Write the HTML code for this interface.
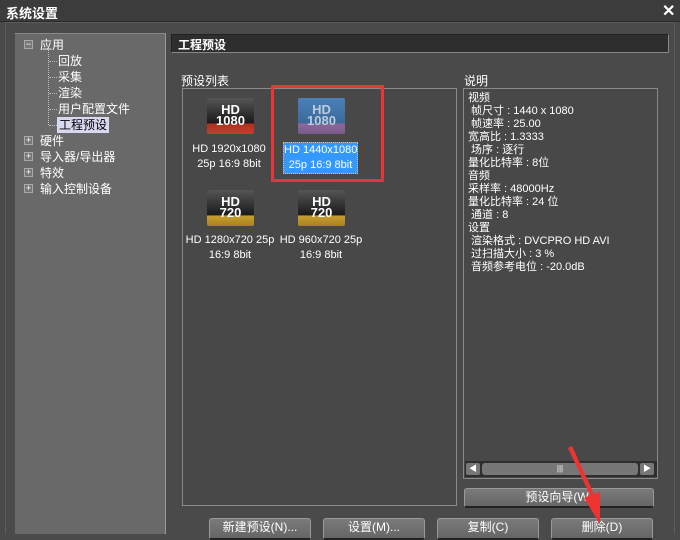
<!DOCTYPE html>
<html><head><meta charset="utf-8"><style>
*{margin:0;padding:0;box-sizing:border-box}
body{width:680px;height:534px;background:#4a4a4a;font-family:"Liberation Sans","Noto Sans CJK SC",sans-serif;font-size:12px;color:#fff;position:relative;overflow:hidden}
.a{position:absolute}
.title{left:0;top:0;width:680px;height:22px;background:#3c3c3c;border-bottom:1px solid #2a2a2a}
.tree{left:15px;top:33px;width:151px;height:501px;background:#696969;border-right:1px solid #9a9a9a;border-top:1px solid #888}
.tl{position:absolute;white-space:nowrap;line-height:16px}
.pm{position:absolute;width:9px;height:9px;border:1px solid #aaa;background:#777;font-size:9px;line-height:7px;text-align:center;color:#fff}
.hz{position:absolute;left:34px;width:8px;border-top:1px dotted #bbb}
.box{border:1px solid #8a8a8a;background:#484848}
.btn{position:absolute;height:20px;background:linear-gradient(#7a7a7a,#666);border:1px solid #999;border-bottom:2px solid #222;border-radius:3px;text-align:center;line-height:17px;font-size:12px}
.hd{position:absolute;width:47px;height:36px;border-radius:2px;text-align:center;font-weight:bold;color:#fff;font-size:13px;line-height:11px;padding-top:6px;font-family:"Liberation Sans",sans-serif}
.lbl{position:absolute;text-align:center;line-height:15px;white-space:nowrap;font-size:11px}
.d{position:absolute;left:468px;line-height:13px;white-space:nowrap;font-size:11px}
</style></head><body>
<div class="a title"></div>
<div class="a" style="left:6px;top:3px;font-size:13px;font-weight:bold">系统设置</div>
<div class="a" style="left:662px;top:1px;font-size:16px;font-weight:bold">✕</div>
<div class="a" style="left:5px;top:22px;width:670px;height:512px;border:1px solid #5c5c5c;border-bottom:none"></div>
<div class="a tree">
<div class="pm" style="left:9px;top:6px">−</div><div class="tl" style="left:25px;top:3px">应用</div>
<div class="a" style="left:33px;top:16px;height:75px;border-left:1px dotted #bbb"></div>
<div class="hz" style="top:27px"></div><div class="hz" style="top:43px"></div><div class="hz" style="top:59px"></div><div class="hz" style="top:75px"></div><div class="hz" style="top:91px"></div>
<div class="tl" style="left:43px;top:19px">回放</div>
<div class="tl" style="left:43px;top:35px">采集</div>
<div class="tl" style="left:43px;top:51px">渲染</div>
<div class="tl" style="left:43px;top:67px">用户配置文件</div>
<div class="tl" style="left:42px;top:83px;background:#d8d8f0;color:#000;padding:0 2px">工程预设</div>
<div class="pm" style="left:9px;top:102px">+</div><div class="tl" style="left:25px;top:99px">硬件</div>
<div class="pm" style="left:9px;top:118px">+</div><div class="tl" style="left:25px;top:115px">导入器/导出器</div>
<div class="pm" style="left:9px;top:134px">+</div><div class="tl" style="left:25px;top:131px">特效</div>
<div class="pm" style="left:9px;top:150px">+</div><div class="tl" style="left:25px;top:147px">输入控制设备</div>
</div>
<div class="a" style="left:171px;top:34px;width:498px;height:19px;background:#2e2e2e;border:1px solid #888;border-top-color:#222;border-left-color:#222"></div>
<div class="a" style="left:178px;top:36px;font-weight:bold;font-size:12px">工程预设</div>
<div class="a" style="left:181px;top:72px">预设列表</div>
<div class="a" style="left:464px;top:72px">说明</div>
<div class="a box" style="left:182px;top:88px;width:275px;height:418px"></div>
<div class="a box" style="left:463px;top:88px;width:195px;height:391px"></div>
<div class="hd" style="left:207px;top:98px;background:linear-gradient(#555 0,#1a1a1a 70%,#b03020 71%,#c04030 100%)">HD<br>1080</div>
<div class="lbl" style="left:186px;top:142px;width:86px">HD 1920x1080<br>25p 16:9 8bit</div>
<div class="hd" style="left:298px;top:98px;background:linear-gradient(#4a80b8 0,#3a6a9a 70%,#8a6a9a 71%,#7a5a8a 100%);color:#bcd">HD<br>1080</div>
<div class="lbl" style="left:283px;top:142px;width:75px;background:#3399ff;border:1px dotted #ffb060">HD 1440x1080<br>25p 16:9 8bit</div>
<div class="a" style="left:271px;top:85px;width:113px;height:97px;border:3px solid #ee3333"></div>
<div class="hd" style="left:207px;top:190px;background:linear-gradient(#555 0,#1a1a1a 70%,#c8a030 71%,#a88020 100%)">HD<br>720</div>
<div class="lbl" style="left:184px;top:233px;width:92px">HD 1280x720 25p<br>16:9 8bit</div>
<div class="hd" style="left:298px;top:190px;background:linear-gradient(#555 0,#1a1a1a 70%,#c8a030 71%,#a88020 100%)">HD<br>720</div>
<div class="lbl" style="left:278px;top:233px;width:86px">HD 960x720 25p<br>16:9 8bit</div>
<div class="d" style="top:92px">视频</div>
<div class="d" style="top:105px">&nbsp;帧尺寸 : 1440 x 1080</div>
<div class="d" style="top:118px">&nbsp;帧速率 : 25.00</div>
<div class="d" style="top:131px">宽高比 : 1.3333</div>
<div class="d" style="top:144px">&nbsp;场序 : 逐行</div>
<div class="d" style="top:157px">量化比特率 : 8位</div>
<div class="d" style="top:170px">音频</div>
<div class="d" style="top:183px">采样率 : 48000Hz</div>
<div class="d" style="top:196px">量化比特率 : 24 位</div>
<div class="d" style="top:209px">&nbsp;通道 : 8</div>
<div class="d" style="top:222px">设置</div>
<div class="d" style="top:235px">&nbsp;渲染格式 : DVCPRO HD AVI</div>
<div class="d" style="top:248px">&nbsp;过扫描大小 : 3 %</div>
<div class="d" style="top:261px">&nbsp;音频参考电位 : -20.0dB</div>
<div class="a" style="left:465px;top:461px;width:192px;height:16px;background:#2e2e2e"></div>
<div class="a" style="left:466px;top:463px;width:14px;height:12px;background:#777;border-radius:2px;font-size:8px;line-height:12px;text-align:center">◀</div>
<div class="a" style="left:482px;top:463px;width:156px;height:12px;background:#777;border-radius:3px;font-size:8px;line-height:12px;text-align:center">|||</div>
<div class="a" style="left:640px;top:463px;width:14px;height:12px;background:#777;border-radius:2px;font-size:8px;line-height:12px;text-align:center">▶</div>
<div class="btn" style="left:464px;top:488px;width:190px">预设向导(W)</div>
<div class="btn" style="left:209px;top:518px;width:102px;height:22px">新建预设(N)...</div>
<div class="btn" style="left:323px;top:518px;width:102px;height:22px">设置(M)...</div>
<div class="btn" style="left:437px;top:518px;width:102px;height:22px">复制(C)</div>
<div class="btn" style="left:551px;top:518px;width:102px;height:22px">删除(D)</div>
<svg class="a" style="left:560px;top:440px" width="50" height="94"><path d="M8 8 L30 55 L24 58 L40 84 L40 52 L34 54 L12 6 Z" fill="#ee3333"/></svg>
</body></html>
